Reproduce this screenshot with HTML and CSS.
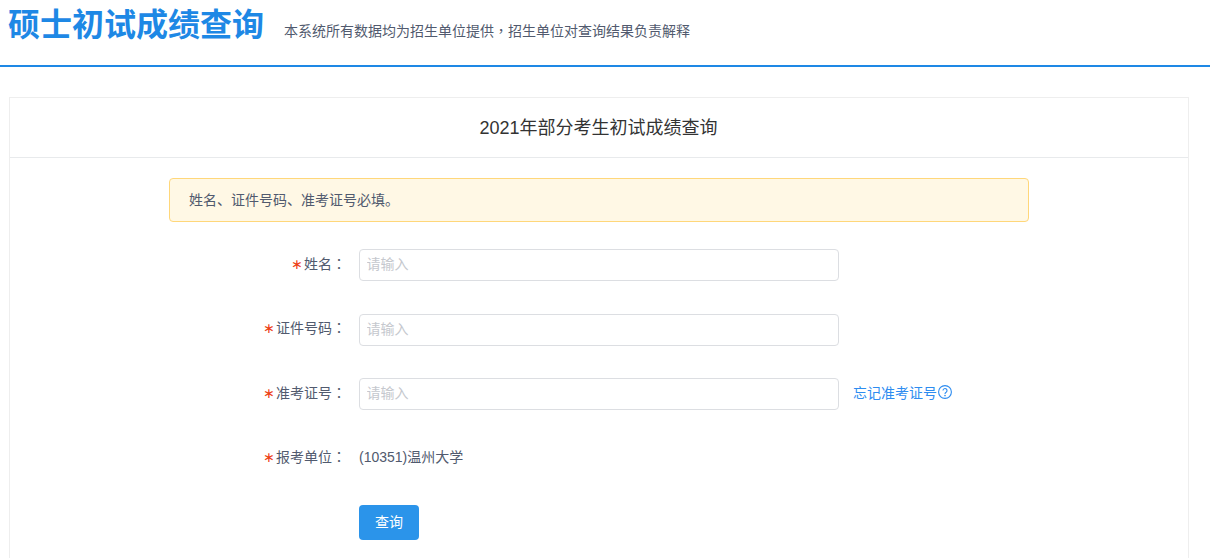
FILE: index.html
```html
<!DOCTYPE html>
<html lang="zh-CN">
<head>
    <meta charset="UTF-8">
    <title>硕士初试成绩查询</title>
    <link rel="stylesheet" href="styles.css">
</head>
<body>
    <div class="header">
        <h1 class="site-title">硕士初试成绩查询</h1>
        <span class="site-note">本系统所有数据均为招生单位提供<span class="punct" lang="zh-TW">，</span>招生单位对查询结果负责解释</span>
    </div>
    <div class="card">
        <div class="card-head">2021年部分考生初试成绩查询</div>
        <div class="card-body">
            <div class="alert">姓名、证件号码、准考证号必填。</div>
            <form class="form">
                <div class="form-row">
                    <label class="form-label">姓名<span class="punct" lang="zh-TW">：</span></label>
                    <input class="form-input" type="text" placeholder="请输入">
                </div>
                <div class="form-row">
                    <label class="form-label">证件号码<span class="punct" lang="zh-TW">：</span></label>
                    <input class="form-input" type="text" placeholder="请输入">
                </div>
                <div class="form-row">
                    <label class="form-label">准考证号<span class="punct" lang="zh-TW">：</span></label>
                    <input class="form-input" type="text" placeholder="请输入">
                    <a class="forgot" href="#">忘记准考证号<svg class="help-icon" viewBox="0 0 14 14" width="14" height="14"><circle cx="7" cy="7" r="6.4" fill="none" stroke="currentColor" stroke-width="1.1"/><path d="M5 5.6a2 2 0 1 1 3.1 1.6c-.8.5-1.1.9-1.1 1.7" fill="none" stroke="currentColor" stroke-width="1.1"/><circle cx="7" cy="10.6" r=".8" fill="currentColor"/></svg></a>
                </div>
                <div class="form-row">
                    <label class="form-label">报考单位<span class="punct" lang="zh-TW">：</span></label>
                    <span class="form-value">(10351)温州大学</span>
                </div>
                <div class="form-row">
                    <span class="form-label-blank"></span>
                    <button class="btn" type="button">查询</button>
                </div>
            </form>
        </div>
    </div>
</body>
</html>
```

FILE: styles.css
```css
* {
    box-sizing: border-box;
}
html, body {
    height: 558px;
    overflow: hidden;
}
body {
    margin: 0;
    background: #fff;
    color: #515a6e;
    font-family: "Liberation Sans", "Noto Sans CJK SC", sans-serif;
    font-size: 14px;
}
.punct {
    font-family: "Noto Sans CJK TC", sans-serif;
}
.header {
    display: flex;
    align-items: flex-start;
    height: 67px;
    padding: 5px 0 0 8px;
    border-bottom: 2px solid #1e88e5;
}
.site-title {
    margin: 0;
    font-size: 32px;
    line-height: 40px;
    font-weight: bold;
    color: #1e88e5;
}
.site-note {
    margin: 14px 0 0 20px;
    line-height: 22px;
    color: #515a6e;
}
.card {
    margin: 30px 21px 0 9px;
    border: 1px solid #eeeeee;
    height: 470px;
}
.card-head {
    height: 60px;
    line-height: 60px;
    padding-right: 1px;
    text-align: center;
    font-size: 18px;
    color: #333;
    border-bottom: 1px solid #e8eaec;
}
.card-body {
    padding: 20px 159px 0;
}
.alert {
    width: 860px;
    height: 44px;
    line-height: 42px;
    padding-left: 19px;
    background: #fff8e5;
    border: 1px solid #ffd77a;
    border-radius: 4px;
}
.form {
    margin-top: 27px;
}
.form-row {
    display: flex;
    align-items: center;
    height: 32px;
    margin-bottom: 32.5px;
}
.form-label {
    width: 177px;
    padding-bottom: 5px;
    text-align: right;
}
.form-label::before {
    content: "\2217";
    margin-right: 1px;
    color: #ed4014;
    font-family: "DejaVu Sans", sans-serif;
    font-size: 14px;
}
.form-label-blank {
    width: 190px;
}
.form-input {
    width: 480px;
    height: 32px;
    margin-left: 13px;
    padding: 3px 6.5px 5px;
    border: 1px solid #dcdee2;
    border-radius: 4px;
    font: inherit;
    color: #515a6e;
    outline: none;
}
.form-input::placeholder {
    color: #c5c8ce;
}
.form-value {
    margin-left: 13px;
    padding-bottom: 5px;
}
.forgot {
    display: flex;
    align-items: center;
    margin-left: 14px;
    padding-bottom: 5px;
    color: #2d8cf0;
    text-decoration: none;
}
.help-icon {
    margin-left: 1px;
}
.btn {
    width: 60px;
    height: 35px;
    padding: 0 0 3px;
    margin-top: -1px;
    border: none;
    border-radius: 4px;
    background: #2b94ea;
    color: #fff;
    font: inherit;
}
```
